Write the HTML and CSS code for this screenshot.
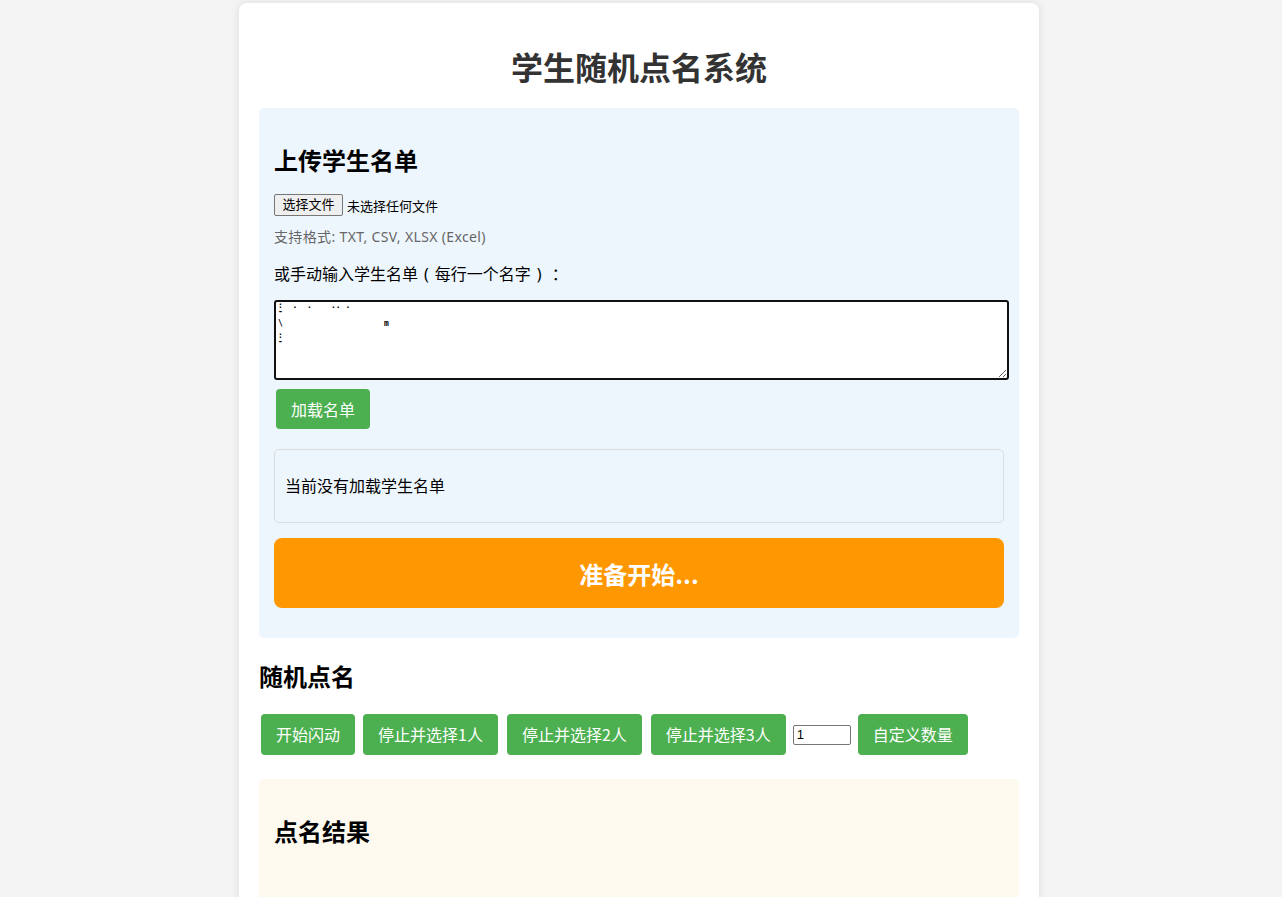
FILE: index.html
```html
<!DOCTYPE html>
<html lang="zh-CN">
<head>
<meta charset="utf-8">
<title>学生随机点名系统</title>
<link rel="stylesheet" href="styles.css">
</head>
<body>
<div class="container">
  <h1 class="title">学生随机点名系统</h1>

  <section class="upload">
    <h2 class="sec-title">上传学生名单</h2>
    <div class="file-row">
      <span class="file-btn">选择文件</span>
      <span class="file-name">未选择任何文件</span>
    </div>
    <p class="hint">支持格式: TXT, CSV, XLSX (Excel)</p>
    <p class="label">或手动输入学生名单<span class="paren">(</span>每行一个名字<span class="paren">)</span><span class="colon">：</span></p>
    <textarea class="names">:  .  . ‾‾ .. .
-

\                     m

:
-</textarea>
    <div class="load-row"><button class="btn">加载名单</button></div>
    <div class="status"><p>当前没有加载学生名单</p></div>
    <div class="display">准备开始...</div>
  </section>

  <h2 class="roll-title">随机点名</h2>
  <div class="controls">
    <button class="btn">开始闪动</button>
    <button class="btn">停止并选择1人</button>
    <button class="btn btn-wide">停止并选择2人</button>
    <button class="btn btn-wide">停止并选择3人</button>
    <input class="count" type="text" value="1">
    <button class="btn">自定义数量</button>
  </div>

  <section class="result">
    <h2 class="sec-title">点名结果</h2>
  </section>
</div>
</body>
</html>
```

FILE: styles.css
```css
html, body {
  margin: 0;
  padding: 0;
}
body {
  background: #f4f4f4;
  font-family: "Noto Sans", "Noto Sans CJK SC", sans-serif;
  color: #000;
  padding-right: 4px;
}
.container {
  width: 800px;
  box-sizing: border-box;
  margin: 3px auto 0;
  padding: 20px 20px 40px;
  background: #fff;
  border-radius: 8px;
  box-shadow: 0 0 10px rgba(0,0,0,0.1);
  min-height: 900px;
}
.title {
  margin: 22px 0 21px;
  text-align: center;
  font-size: 32px;
  line-height: 42px;
  font-weight: 700;
  color: #333;
  font-family: "Noto Sans CJK SC", sans-serif;
}
.upload {
  background: #eef6fd;
  border-radius: 5px;
  padding: 15px;
}
.sec-title {
  margin: 20px 0 16px;
  font-size: 24px;
  line-height: 34px;
  font-weight: 700;
  font-family: "Noto Sans CJK SC", sans-serif;
}
.file-row {
  display: flex;
  align-items: center;
  gap: 4px;
  font-size: 13px;
  margin-top: 17px;
  height: 22px;
}
.file-btn {
  display: inline-block;
  box-sizing: border-box;
  width: 69px;
  text-align: center;
  height: 22px;
  line-height: 19px;
  border: 1px solid #767676;
  border-radius: 2px;
  background: #efefef;
  color: #000;
}
.file-name { color: #000; }
.hint {
  margin: 11px 0 0;
  font-size: 14px;
  line-height: 20px;
  color: #666;
  letter-spacing: 0.35px;
}
.label {
  margin: 16px 0 0;
  font-size: 16px;
  line-height: 22px;
}
.paren {
  display: inline-block;
  padding: 0 6px;
}
.colon {
  display: inline-block;
  padding-left: 4px;
}
.names {
  display: block;
  box-sizing: border-box;
  width: 735px;
  height: 80px;
  margin: 15px 0 0;
  padding: 1px 2px;
  border: 2px solid #111;
  border-radius: 3px;
  background: #fff;
  font-family: "DejaVu Sans Mono", monospace;
  font-size: 8px;
  font-weight: 700;
  line-height: 6px;
  color: #000;
  resize: vertical;
  outline: none;
  overflow: hidden;
}
.load-row {
  margin-top: 9px;
  padding-left: 2px;
}
.btn {
  display: inline-block;
  border: none;
  border-radius: 4px;
  background: #4caf50;
  color: #fff;
  font-family: "Noto Sans CJK SC", sans-serif;
  font-size: 16px;
  line-height: 20px;
  padding: 10px 15px;
  cursor: pointer;
}
.status {
  margin-top: 20px;
  border: 1px solid #dcdcdc;
  border-radius: 5px;
  padding: 10px;
  font-size: 16px;
}
.status p {
  margin: 16px 0;
  line-height: 20px;
}
.display {
  margin-top: 15px;
  height: 70px;
  display: flex;
  align-items: center;
  justify-content: center;
  background: #ff9800;
  border-radius: 8px;
  color: #fff;
  font-size: 24px;
  font-weight: 700;
  font-family: "Noto Sans CJK SC", sans-serif;
  margin-bottom: 15px;
}
.roll-title {
  margin: 21px 0 21px;
  font-size: 24px;
  line-height: 34px;
  font-weight: 700;
  font-family: "Noto Sans CJK SC", sans-serif;
}
.controls {
  display: flex;
  align-items: center;
  gap: 7px;
  padding-left: 2px;
  margin-top: 2px;
}
.controls .btn { line-height: 21px; }
.controls .btn + .btn { margin-left: 1px; }
.controls .btn.btn-wide { margin-left: 2px; }
.count {
  box-sizing: border-box;
  width: 58px;
  height: 20px;
  padding: 0 3px;
  border: 1px solid #767676;
  border-radius: 2px;
  font-family: "Liberation Sans", sans-serif;
  font-size: 13px;
  color: #000;
}
.result {
  margin-top: 24px;
  background: #fdf9ef;
  border-radius: 5px;
  padding: 15px;
  min-height: 200px;
}
```
